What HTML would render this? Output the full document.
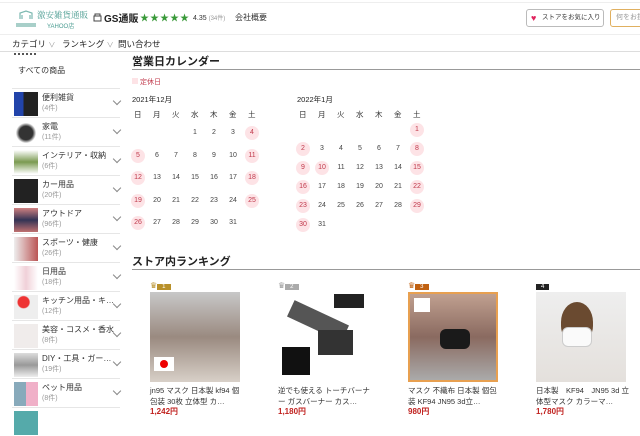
<!DOCTYPE html>
<html><head><meta charset="utf-8"><style>
*{margin:0;padding:0;box-sizing:border-box}
body{width:640px;height:420px;overflow:hidden;background:#fff;font-family:"Liberation Sans","Noto Sans CJK JP",sans-serif;color:#333;position:relative}
.a{position:absolute;white-space:nowrap}
.side .it{position:absolute;left:12px;width:108px;height:29px;border-top:1px solid #e6e6e6}
.side .th{position:absolute;left:2px;top:3px;width:24px;height:24px}
.side .nm{position:absolute;left:30px;top:3px;font-size:8px;color:#333}
.side .ct{position:absolute;left:30px;top:14px;font-size:7px;color:#999}
.side .cv{position:absolute;right:0;top:9px;width:6px;height:6px;border-right:1px solid #888;border-bottom:1px solid #888;transform:rotate(45deg)}
.d{position:absolute;width:14px;height:14px;line-height:14px;text-align:center;font-size:7px;color:#444;margin-left:-7px;margin-top:-7px}
.h{background:#fde3e6;border-radius:50%;color:#c0394b}
.wk{position:absolute;font-size:7.5px;color:#333;margin-left:-4px}
.p .t{font-size:7.5px;color:#333;line-height:11px;position:absolute;top:104px;width:95px;white-space:normal}
.p .pr{position:absolute;top:125px;font-size:8px;color:#c0221f;font-weight:bold}
</style></head><body>
<div class="a" style="left:0;top:2px;width:640px;border-top:1px solid #eee"></div>
<svg class="a" style="left:14px;top:9px" width="24" height="22"><path d="M6 10 L6 4 L12 2 L18 4 L18 10 M8 10 L8 6 M16 10 L16 6" stroke="#7bb8b0" fill="none" stroke-width="1.2"/><rect x="2" y="14" width="20" height="4" fill="#a8cfc9"/></svg>
<div class="a" style="left:37px;top:9px;font-size:8.5px;color:#4a9c91;font-family:'Noto Serif CJK SC',serif">激安雑貨通販</div>
<div class="a" style="left:47px;top:21px;font-size:6px;color:#4a9c91">YAHOO店</div>
<svg class="a" style="left:93px;top:13px" width="9" height="9"><rect x="1" y="3" width="7" height="5" fill="none" stroke="#444"/><path d="M2 3 V1 H7 V3" stroke="#444" fill="none"/></svg>
<div class="a" style="left:104px;top:10px;font-size:10px;font-weight:bold;color:#222">GS通販</div>
<div class="a" style="left:140px;top:11px;font-size:9px;color:#3a9a3a;letter-spacing:1px">★★★★★</div>
<div class="a" style="left:193px;top:13px;font-size:7px;color:#333">4.35 <span style="color:#999;font-size:6px">(34件)</span></div>
<div class="a" style="left:235px;top:12px;font-size:8px;color:#333">会社概要</div>
<div class="a" style="left:526px;top:9px;width:78px;height:18px;border:1px solid #bbb;border-radius:3px;font-size:6.5px;line-height:16px;padding-left:15px;color:#333"><span style="position:absolute;left:4px;color:#e0245e;font-size:9px">♥</span>ストアをお気に入り</div>
<div class="a" style="left:610px;top:9px;width:40px;height:18px;border:1px solid #e0b060;border-radius:3px;font-size:7px;line-height:16px;padding-left:5px;color:#999">何をお探</div>
<div class="a" style="left:0;top:34px;width:640px;border-top:1px solid #eee"></div>
<div class="a" style="left:12px;top:38px;font-size:8.5px;color:#222">カテゴリ <span style="color:#999;font-size:7px">∨</span></div>
<div class="a" style="left:62px;top:38px;font-size:8.5px;color:#222">ランキング <span style="color:#999;font-size:7px">∨</span></div>
<div class="a" style="left:118px;top:38px;font-size:8.5px;color:#222">問い合わせ</div>
<div class="a" style="left:0;top:51px;width:640px;border-top:1px solid #ddd"></div>
<div class="a" style="left:14px;top:53px;width:22px;border-top:2px dotted #555"></div>
<div class="a" style="left:18px;top:65px;font-size:8px;color:#333">すべての商品</div>
<div class="side">
<div class="it" style="top:88px"><div class="th" style="background:linear-gradient(90deg,#2244aa 40%,#222 40%)"></div><div class="nm">便利雑貨</div><div class="ct">(4件)</div><div class="cv"></div></div>
<div class="it" style="top:117px"><div class="th" style="background:radial-gradient(#333 40%,#fff 60%)"></div><div class="nm">家電</div><div class="ct">(11件)</div><div class="cv"></div></div>
<div class="it" style="top:146px"><div class="th" style="background:linear-gradient(#fff,#7a9a50,#fff)"></div><div class="nm">インテリア・収納</div><div class="ct">(6件)</div><div class="cv"></div></div>
<div class="it" style="top:175px"><div class="th" style="background:#222"></div><div class="nm">カー用品</div><div class="ct">(20件)</div><div class="cv"></div></div>
<div class="it" style="top:204px"><div class="th" style="background:linear-gradient(#d08080,#335,#c07070)"></div><div class="nm">アウトドア</div><div class="ct">(96件)</div><div class="cv"></div></div>
<div class="it" style="top:233px"><div class="th" style="background:linear-gradient(90deg,#eee,#b55)"></div><div class="nm">スポーツ・健康</div><div class="ct">(26件)</div><div class="cv"></div></div>
<div class="it" style="top:262px"><div class="th" style="background:linear-gradient(90deg,#fff,#f0d0d8,#fff)"></div><div class="nm">日用品</div><div class="ct">(18件)</div><div class="cv"></div></div>
<div class="it" style="top:291px"><div class="th" style="background:radial-gradient(circle at 40% 30%,#e33 25%,#eee 30%)"></div><div class="nm">キッチン用品・キ…</div><div class="ct">(12件)</div><div class="cv"></div></div>
<div class="it" style="top:320px"><div class="th" style="background:#f0eceb"></div><div class="nm">美容・コスメ・香水</div><div class="ct">(8件)</div><div class="cv"></div></div>
<div class="it" style="top:349px"><div class="th" style="background:linear-gradient(#ddd,#999,#eee)"></div><div class="nm">DIY・工具・ガー…</div><div class="ct">(19件)</div><div class="cv"></div></div>
<div class="it" style="top:378px"><div class="th" style="background:linear-gradient(90deg,#8ab 50%,#f0b0c8 50%)"></div><div class="nm">ペット用品</div><div class="ct">(8件)</div><div class="cv"></div></div>
<div class="it" style="top:407px"><div class="th" style="background:#5aa"></div></div>
</div>
<div class="a" style="left:132px;top:53px;font-size:11px;font-weight:bold;color:#222">営業日カレンダー</div>
<div class="a" style="left:132px;top:69px;width:508px;border-top:1px solid #999"></div>
<div class="a" style="left:132px;top:77px;font-size:7px;color:#c0394b"><span style="display:inline-block;width:6px;height:6px;background:#fde3e6;margin-right:2px"></span>定休日</div>
<div class="a" style="left:132px;top:94px;font-size:7.5px;color:#222">2021年12月</div>
<div class="a" style="left:297px;top:94px;font-size:7.5px;color:#222">2022年1月</div>
<div id="cal"></div>
<div class="a" style="left:132px;top:253px;font-size:11px;font-weight:bold;color:#222">ストア内ランキング</div>
<div class="a" style="left:132px;top:269px;width:508px;border-top:1px solid #999"></div>
<div class="p a" style="left:150px;top:281px"><div class="a" style="top:0;font-size:8px;color:#b8902a">♛<span style="background:#b8902a;color:#fff;padding:0 5px;font-size:6px">1</span></div><div class="a" style="top:11px;width:90px;height:90px;background:linear-gradient(#c8c8c8,#9a8a80,#d8d0c8)"><div class="a" style="left:4px;top:65px;width:20px;height:14px;background:#fff"><div style="margin:3px 6px;width:8px;height:8px;border-radius:50%;background:#e00"></div></div></div><div class="t">jn95 マスク 日本製 kf94 個包装 30枚 立体型 カ…</div><div class="pr">1,242円</div></div>
<div class="p a" style="left:278px;top:281px"><div class="a" style="top:0;font-size:8px;color:#999">♛<span style="background:#aaa;color:#fff;padding:0 5px;font-size:6px">2</span></div><div class="a" style="top:11px;width:90px;height:90px;background:#fff"><div class="a" style="left:10px;top:20px;width:60px;height:18px;background:#555;transform:rotate(25deg)"></div><div class="a" style="left:40px;top:38px;width:35px;height:25px;background:#333"></div><div class="a" style="left:56px;top:2px;width:30px;height:14px;background:#222"></div><div class="a" style="left:4px;top:55px;width:28px;height:28px;background:#111"></div></div><div class="t">逆でも使える トーチバーナー ガスバーナー カス…</div><div class="pr">1,180円</div></div>
<div class="p a" style="left:408px;top:281px"><div class="a" style="top:0;font-size:8px;color:#c06010">♛<span style="background:#c06010;color:#fff;padding:0 5px;font-size:6px">3</span></div><div class="a" style="top:11px;width:90px;height:90px;border:2px solid #e8a050;background:linear-gradient(#c0a090,#8a6a60,#aaa)"><div class="a" style="left:30px;top:35px;width:30px;height:20px;background:#1a1a1a;border-radius:6px"></div><div class="a" style="left:4px;top:4px;width:16px;height:14px;background:#fff"></div></div><div class="t">マスク 不織布 日本製 個包装 KF94 JN95 3d立…</div><div class="pr">980円</div></div>
<div class="p a" style="left:536px;top:281px"><div class="a" style="top:0;font-size:8px"><span style="background:#222;color:#fff;padding:0 5px;font-size:6px">4</span></div><div class="a" style="top:11px;width:90px;height:90px;background:linear-gradient(#eee,#e4e0dc)"><div class="a" style="left:25px;top:10px;width:32px;height:40px;background:#6a4a30;border-radius:50% 50% 40% 40%"></div><div class="a" style="left:26px;top:35px;width:30px;height:20px;background:#fafafa;border-radius:6px;border:1px solid #ccc"></div></div><div class="t">日本製　KF94　JN95 3d 立体型マスク カラーマ…</div><div class="pr">1,780円</div></div>
<script>
var c=document.getElementById('cal'),h='',w=['日','月','火','水','木','金','土'];
function cal(x0,yw,y0,dy,first,n){for(var i=0;i<7;i++)h+='<div class="wk" style="left:'+(x0+i*19)+'px;top:'+yw+'px">'+w[i]+'</div>';
for(var d=1;d<=n;d++){var p=first+d-1,col=p%7,row=Math.floor(p/7);var hol=(col==0||col==6);if(x0>200&&d==10)hol=true;
h+='<div class="d'+(hol?' h':'')+'" style="left:'+(x0+col*19)+'px;top:'+(y0+row*dy)+'px">'+d+'</div>';}}
cal(138,109,133,22.6,3,31);cal(303,109,130,19,6,31);c.innerHTML=h;
</script>
</body></html>
